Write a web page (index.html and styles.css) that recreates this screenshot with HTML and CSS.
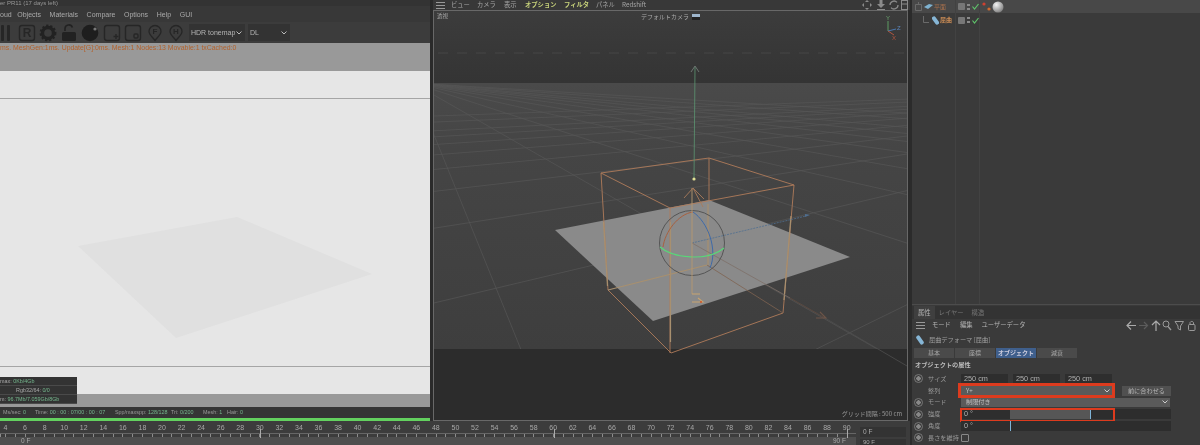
FILE: index.html
```html
<!DOCTYPE html>
<html lang="ja">
<head>
    <meta charset="UTF-8">
    <meta name="viewport" content="width=device-width, initial-scale=1.0">
    <title>Cinema 4D Redshift</title>
    <link rel="stylesheet" href="styles.css">
</head>
<body>
<div class="app">
    <div class="work">
        <div class="panes">

            <!-- Render view -->
            <div class="render">
                <div class="render-title">er PR11 (17 days left)</div>
                <div class="render-menu">
                    <span>oud</span><span>Objects</span><span>Materials</span><span>Compare</span><span>Options</span><span>Help</span><span>GUI</span>
                </div>
                <div class="render-tools">
                    <svg class="tool-icons" width="184" height="21" viewBox="0 0 184 21">
                        <rect x="1" y="3" width="3" height="16" rx="1" fill="#262626"/>
                        <rect x="7" y="3" width="3" height="16" rx="1" fill="#262626"/>
                        <rect x="19.5" y="3.5" width="15" height="15" rx="2.5" fill="none" stroke="#262626" stroke-width="1.4"/>
                        <text x="27" y="15" text-anchor="middle" class="tool-letter">R</text>
                        <circle cx="48" cy="11" r="5.5" fill="none" stroke="#222" stroke-width="3.4"/>
                        <circle cx="48" cy="11" r="7.4" fill="none" stroke="#222" stroke-width="2" stroke-dasharray="2.2 1.9"/>
                        <path d="M65 9V6.5a3.8 3.8 0 0 1 7.4-1" fill="none" stroke="#222" stroke-width="1.6"/>
                        <rect x="62" y="10" width="14" height="9" rx="1.5" fill="#222"/>
                        <circle cx="90" cy="11" r="8.3" fill="#1e1e1e"/>
                        <circle cx="95" cy="7" r="1.6" fill="#777"/>
                        <rect x="104.5" y="3.5" width="15" height="15" rx="2.5" fill="none" stroke="#262626" stroke-width="1.4"/>
                        <path d="M116 12v5M113.5 14.5h5" stroke="#262626" stroke-width="1.4"/>
                        <rect x="125.5" y="3.5" width="15" height="15" rx="2.5" fill="none" stroke="#262626" stroke-width="1.4"/>
                        <rect x="134" y="12" width="4" height="4" rx="1" fill="none" stroke="#262626" stroke-width="1.4"/>
                        <path d="M155 3.5a6 6 0 0 1 6 6c0 3-3 5-6 9-3-4-6-6-6-9a6 6 0 0 1 6-6z" fill="none" stroke="#262626" stroke-width="1.3"/>
                        <text x="155" y="12" text-anchor="middle" class="tool-pin">F</text>
                        <path d="M176 3.5a6 6 0 0 1 6 6c0 3-3 5-6 9-3-4-6-6-6-9a6 6 0 0 1 6-6z" fill="none" stroke="#262626" stroke-width="1.3"/>
                        <text x="176" y="12" text-anchor="middle" class="tool-pin">H</text>
                    </svg>
                    <div class="tool-select tool-select-wide">HDR tonemap<svg width="6" height="4" viewBox="0 0 6 4"><path d="M.5.5 3 3 5.5.5" fill="none" stroke="#bbb"/></svg></div>
                    <div class="tool-select">DL<svg width="6" height="4" viewBox="0 0 6 4"><path d="M.5.5 3 3 5.5.5" fill="none" stroke="#bbb"/></svg></div>
                </div>
                <div class="render-log">ms. MeshGen:1ms. Update[G]:0ms. Mesh:1 Nodes:13 Movable:1 txCached:0</div>
                <div class="render-image">
                    <div class="image-head"></div>
                    <div class="image-body">
                        <svg class="image-plane" viewBox="0 0 430 267" width="430" height="267">
                            <polygon points="78,147 237,118 372,175 176,239" fill="#e0e0e0"/>
                        </svg>
                    </div>
                    <div class="image-foot"></div>
                    <div class="stats">
                        <div>max: <b>0Kb/4Gb</b></div>
                        <div class="stats-mid">Rgb32/64: <b>0/0</b></div>
                        <div>m: <b>96.7Mb/7.059Gb/8Gb</b></div>
                    </div>
                </div>
                <div class="render-gap"></div>
                <div class="render-status">
                    <span class="st-a">Ms/sec: <b>0</b></span>
                    <span class="st-b">Time: <b>00 : 00 : 07/00 : 00 : 07</b></span>
                    <span class="st-c">Spp/maxspp: <b>128/128</b></span>
                    <span class="st-d">Tri: <b>0/200</b></span>
                    <span class="st-e">Mesh: <b>1</b></span>
                    <span>Hair: <b>0</b></span>
                </div>
                <div class="render-progress"></div>
            </div>

            <!-- 3D viewport -->
            <div class="view">
                <div class="view-menu">
                    <svg class="burger" width="9" height="7" viewBox="0 0 9 7"><path d="M0 .5h9M0 3.5h9M0 6.5h9" stroke="#999"/></svg>
                    <span class="vm-a">ビュー</span>
                    <span class="vm-b">カメラ</span>
                    <span class="vm-c">表示</span>
                    <span class="vm-d hot">オプション</span>
                    <span class="vm-e hot">フィルタ</span>
                    <span class="vm-f">パネル</span>
                    <span>Redshift</span>
                    <svg class="view-nav" width="46" height="10" viewBox="0 0 46 10">
                        <path d="M5 0 7 2H3zM5 10 3 8h4zM0 5l2-2v4zM10 5 8 7V3z" fill="#8a8a8a"/>
                        <path d="M17.5 0h3v4h2.5L19 8l-4-4h2.5zM15 9h8v1h-8z" fill="#8a8a8a"/>
                        <path d="M28 5a4 4 0 0 1 7-2.6M36 5a4 4 0 0 1-7 2.6" fill="none" stroke="#8a8a8a" stroke-width="1.3"/>
                        <rect x="39.5" y=".5" width="6" height="9" fill="none" stroke="#8a8a8a"/>
                        <path d="M39.5 4h6" stroke="#8a8a8a"/>
                    </svg>
                </div>
                <div class="view-canvas">
                    <svg class="scene" viewBox="434 11 473 409" preserveAspectRatio="none">
                        <defs>
                            <linearGradient id="sky" x1="0" y1="0" x2="0" y2="1">
                                <stop offset="0" stop-color="#3c3c3c"/>
                                <stop offset="1" stop-color="#343434"/>
                            </linearGradient>
                            <linearGradient id="floor" x1="0" y1="0" x2="0" y2="1">
                                <stop offset="0" stop-color="#4a4a4a"/>
                                <stop offset=".25" stop-color="#454545"/>
                                <stop offset="1" stop-color="#3e3e3e"/>
                            </linearGradient>
                            <clipPath id="ground"><rect x="434" y="83" width="473" height="266"/></clipPath>
                        </defs>
                        <rect x="434" y="11" width="473" height="72" fill="url(#sky)"/>
                        <rect x="434" y="83" width="473" height="266" fill="url(#floor)"/>
                        <rect x="434" y="349" width="473" height="71" fill="#2c2c2c"/>
                        <path d="M438 53H906" stroke="#474747" stroke-dasharray="10 9"/>

                        <!-- floor grid, lines run to two vanishing points -->
                        <g clip-path="url(#ground)" fill="none" stroke="#565656" stroke-width=".7">
                            <path d="M413 83-148 683M413 83 656 683M413 83 1460 683M413 83 2264 683M413 83 3068 683M413 83 3872 683M413 83 4676 683M413 83 5480 683M413 83 6284 683M413 83 7088 683M413 83 8692 683M413 83 10296 683"/>
                            <path d="M1360 83 1434 683M1360 83 134 683M1360 83-1166 683M1360 83-2466 683M1360 83-3766 683M1360 83-5066 683M1360 83-6366 683M1360 83-7666 683M1360 83-8966 683M1360 83-10266 683M1360 83-12866 683M1360 83-15466 683"/>
                        </g>
                        <path d="M825 318 907 366" stroke="#4e4e4e" stroke-width=".8"/>

                        <!-- plane -->
                        <polygon points="555,230 709,200 850,257 653,321" fill="#8a8a8a"/>

                        <!-- bend box -->
                        <g fill="none" stroke="#b07c5a" stroke-width=".9">
                            <path d="M601 173 709 158 794 185 670 208 601 173 608 290 671 353 783 313 794 185M709 158V200M670 208V353"/>
                        </g>
                        <path d="M707 265 783 313" fill="none" stroke="#7f6350" stroke-width=".8"/>
                        <g fill="none" stroke="#a8906f" stroke-width="1.2">
                            <path d="M608 290 707 265M670.5 222V342M603.5 222 607.5 286M791 216 784 300M708 204V265"/>
                        </g>

                        <!-- axes -->
                        <path d="M692 243 806 216" stroke="#4f6e90" stroke-width=".8" stroke-dasharray="2 1"/>
                        <path d="M805 214 810 215 805 217z" fill="#4f6e90"/>
                        <path d="M692 243 790 298" stroke="#7d7068" stroke-width=".8"/>
                        <path d="M790 298 825 318" stroke="#5e4b41" stroke-width=".9"/>
                        <path d="M816 318H826L820 312" fill="none" stroke="#6e5548" stroke-width="1.1"/>
                        <path d="M694 179 695 67" stroke="#5c9571" stroke-width=".8"/>
                        <path d="M691 72 695 66 699 72" fill="none" stroke="#6c7671"/>
                        <circle cx="694" cy="179" r="1.6" fill="#e0df96"/>

                        <!-- sphere -->
                        <circle cx="692" cy="243" r="32.5" fill="none" stroke="#555" stroke-width="1"/>
                        <path d="M693 212C678 214 665 232 663 247" fill="none" stroke="#a8603f" stroke-width="1"/>
                        <path d="M693 212C708 222 718 250 710 268" fill="none" stroke="#3f6aa8" stroke-width="1"/>
                        <path d="M660 247C672 258 708 262 724 248" fill="none" stroke="#58d878" stroke-width="1.1"/>

                        <!-- orange gizmo -->
                        <path d="M692 188V294" stroke="#b59770" stroke-width=".9"/>
                        <path d="M684 198 693 188 704 199M693 188 703 207" fill="none" stroke="#a87a5a" stroke-width=".9"/>
                        <path d="M692 294H700M698 298 703 302H692" fill="none" stroke="#c8a470" stroke-width="1.1"/>
                        <circle cx="701" cy="302" r=".9" fill="#d44c20"/>
                    </svg>
                    <span class="cam-type">透視</span>
                    <span class="cam-name">デフォルトカメラ<i class="cam-mark"></i></span>
                    <svg class="gizmo" width="22" height="26" viewBox="0 0 22 26">
                        <text x="6" y="6" class="giz-y">Y</text>
                        <path d="M8 7V17" stroke="#5d9c63" stroke-width="1"/>
                        <path d="M8 17 16 15" stroke="#4a78b0" stroke-width="1"/>
                        <path d="M8 17 14 21" stroke="#b4563f" stroke-width="1"/>
                        <text x="17" y="16" class="giz-z">Z</text>
                        <text x="12" y="26" class="giz-x">X</text>
                    </svg>
                    <span class="grid-size">グリッド間隔 : 500 cm</span>
                </div>
            </div>
        </div>

        <!-- Timeline -->
        <div class="timeline">
            <div class="ruler">
                <div class="nums">
                    <span>4</span><span>6</span><span>8</span><span>10</span><span>12</span><span>14</span><span>16</span><span>18</span><span>20</span><span>22</span><span>24</span><span>26</span><span>28</span><span>30</span><span>32</span><span>34</span><span>36</span><span>38</span><span>40</span><span>42</span><span>44</span><span>46</span><span>48</span><span>50</span><span>52</span><span>54</span><span>56</span><span>58</span><span>60</span><span>62</span><span>64</span><span>66</span><span>68</span><span>70</span><span>72</span><span>74</span><span>76</span><span>78</span><span>80</span><span>82</span><span>84</span><span>86</span><span>88</span><span>90</span>
                </div>
                <div class="ticks"></div>
                <i class="mark mark-30"></i><i class="mark mark-60"></i><i class="mark mark-90"></i>
                <div class="range"><span>0 F</span><span>90 F</span></div>
            </div>
            <div class="frames">
                <div class="frame">0 F</div>
                <div class="frame frame-end">90 F</div>
            </div>
        </div>
    </div>

    <div class="side">
        <!-- Object manager -->
        <div class="tree">
            <div class="tree-row tree-row-on">
                <svg class="tree-node" width="7" height="9" viewBox="0 0 7 9"><path d="M3.5 0V2M.5 2.5h6v6h-6z" fill="none" stroke="#6a6a6a"/></svg>
                <svg class="tree-icon" width="9" height="7" viewBox="0 0 9 7"><path d="M0 4 5 1l4 1-5 4z" fill="#7fb2d0"/></svg>
                <span class="tree-name">平面</span>
                <i class="vis"></i><i class="dots"></i>
                <svg class="tick" width="7" height="7" viewBox="0 0 7 7"><path d="M.5 3.5 2.5 6 6.5 1" fill="none" stroke="#5fc26a" stroke-width="1.2"/></svg>
                <svg class="tags" width="22" height="12" viewBox="0 0 22 12">
                    <circle cx="2" cy="3" r="1.6" fill="#d04030"/>
                    <circle cx="7" cy="8" r="1.6" fill="#d06a30"/>
                    <defs><radialGradient id="ball" cx=".35" cy=".3" r=".8"><stop offset="0" stop-color="#f4f4f4"/><stop offset="1" stop-color="#777"/></radialGradient></defs>
                    <circle cx="16" cy="6" r="5.5" fill="url(#ball)"/>
                </svg>
            </div>
            <div class="tree-row">
                <svg class="tree-link" width="8" height="8" viewBox="0 0 8 8"><path d="M.5 0V6.5H6" fill="none" stroke="#6a6a6a"/></svg>
                <svg class="tree-icon" width="7" height="9" viewBox="0 0 7 9"><rect x="1.5" y="0" width="4" height="9" rx="1.5" transform="rotate(-35 3.5 4.5)" fill="#86b6d6"/></svg>
                <span class="tree-name tree-name-sel">屈曲</span>
                <i class="vis"></i><i class="dots"></i>
                <svg class="tick" width="7" height="7" viewBox="0 0 7 7"><path d="M.5 3.5 2.5 6 6.5 1" fill="none" stroke="#5fc26a" stroke-width="1.2"/></svg>
            </div>
            <i class="tree-line tree-line-a"></i><i class="tree-line tree-line-b"></i>
        </div>

        <!-- Attribute manager -->
        <div class="props">
            <div class="prop-tabs">
                <span class="prop-tab on">属性</span>
                <span class="prop-tab">レイヤー</span>
                <span class="prop-tab">構造</span>
            </div>
            <div class="prop-menu">
                <svg class="burger" width="9" height="7" viewBox="0 0 9 7"><path d="M0 .5h9M0 3.5h9M0 6.5h9" stroke="#999"/></svg>
                <span>モード</span><span>編集</span><span>ユーザーデータ</span>
                <svg class="prop-nav" width="70" height="11" viewBox="0 0 70 11">
                    <path d="M10 5.5H1M5 1.5l-4 4 4 4" fill="none" stroke="#aaa" stroke-width="1.2"/>
                    <path d="M13 5.5h8M18 2l3.5 3.5L18 9" fill="none" stroke="#5c5c5c" stroke-width="1.2"/>
                    <path d="M30 11V1.5M26 5l4-4 4 4" fill="none" stroke="#aaa" stroke-width="1.2"/>
                    <circle cx="40" cy="4" r="3" fill="none" stroke="#999"/><path d="M42 6.5 45 10" stroke="#999" stroke-width="1.3"/>
                    <path d="M49 1.5h8.5L54.5 6v4l-2.5-1.5V6z" fill="none" stroke="#999"/>
                    <rect x="62.5" y="4.5" width="6.5" height="6" rx="1" fill="none" stroke="#999"/>
                    <path d="M64 4.5V2.5a2 2 0 0 1 3.5 0v2" fill="none" stroke="#999"/>
                </svg>
            </div>
            <div class="prop-title">
                <svg width="8" height="10" viewBox="0 0 8 10"><rect x="2" y="0" width="4" height="10" rx="1.8" transform="rotate(-35 4 5)" fill="#86b6d6"/></svg>
                <span>屈曲デフォーマ [屈曲]</span>
            </div>
            <div class="prop-pages">
                <span>基本</span><span>座標</span><span class="on">オブジェクト</span><span>減衰</span>
            </div>
            <div class="prop-head">オブジェクトの属性</div>

            <div class="row">
                <i class="radio"></i><label>サイズ</label>
                <span class="num">250 cm</span><span class="num">250 cm</span><span class="num">250 cm</span>
            </div>
            <div class="row">
                <i class="radio radio-none"></i><label>整列</label>
                <div class="select select-short hl">Y+<svg width="6" height="4" viewBox="0 0 6 4"><path d="M.5.5 3 3 5.5.5" fill="none" stroke="#ccc"/></svg></div>
                <span class="btn">前に合わせる</span>
            </div>
            <div class="row">
                <i class="radio"></i><label>モード</label>
                <div class="select select-long">制限付き<svg width="6" height="4" viewBox="0 0 6 4"><path d="M.5.5 3 3 5.5.5" fill="none" stroke="#ccc"/></svg></div>
            </div>
            <div class="row">
                <i class="radio"></i><label>強度</label>
                <div class="slider">
                    <span class="num num-deg">0 °</span>
                    <div class="track"><i class="fill"></i><i class="thumb"></i></div>
                    <i class="hl-box"></i>
                </div>
            </div>
            <div class="row">
                <i class="radio"></i><label>角度</label>
                <div class="slider">
                    <span class="num num-deg">0 °</span>
                    <div class="track"><i class="thumb"></i></div>
                </div>
            </div>
            <div class="row">
                <i class="radio"></i><label>長さを維持</label>
                <i class="check"></i>
            </div>
        </div>
    </div>
</div>
</body>
</html>
```

FILE: styles.css
```css
html, body {
    margin: 0;
    height: 100%;
    overflow: hidden;
    background: #3a3a3a;
}

.app {
    display: flex;
    width: 1200px;
    height: 445px;
    overflow: hidden;
    font-family: "Noto Sans CJK JP", "Noto Sans", sans-serif;
    font-size: 7px;
    line-height: 1;
    color: #aaa;
    background: #3a3a3a;
    filter: blur(0.45px);
}

.app i {
    display: block;
    font-style: normal;
}

.work {
    display: flex;
    flex-direction: column;
    flex: 0 0 910px;
}

.panes {
    display: flex;
    height: 421px;
    background: #2a2a2a;
}

/* render view */
.render {
    display: flex;
    flex-direction: column;
    flex: 0 0 430px;
    overflow: hidden;
}

.render-title {
    height: 6px;
    line-height: 6px;
    font-size: 6px;
    background: #333;
    color: #999;
    font-family: "Liberation Sans", sans-serif;
}

.render-menu {
    display: flex;
    align-items: center;
    gap: 8.6px;
    height: 16px;
    background: #383838;
    color: #aaa;
    font-family: "Liberation Sans", sans-serif;
    font-size: 7px;
}

.render-menu span:first-child {
    margin-right: -3px;
}

.render-tools {
    display: flex;
    align-items: center;
    height: 21px;
    background: #3c3c3c;
}

.tool-icons {
    flex: 0 0 184px;
    margin-right: 5px;
}

.tool-letter {
    font: bold 12px "Liberation Sans", sans-serif;
    fill: #262626;
}

.tool-pin {
    font: bold 8px "Liberation Sans", sans-serif;
    fill: #262626;
}

.tool-select {
    display: flex;
    align-items: center;
    justify-content: space-between;
    box-sizing: border-box;
    width: 42px;
    height: 17px;
    padding: 0 3px 0 2px;
    background: #333;
    color: #b5b5b5;
    font-family: "Liberation Sans", sans-serif;
    font-size: 7px;
}

.tool-select-wide {
    width: 56px;
    margin-right: 3px;
}

.render-log {
    height: 28px;
    padding-top: 1px;
    box-sizing: border-box;
    background: #999;
    color: #b3622c;
    font-family: "Liberation Sans", sans-serif;
    font-size: 6.9px;
    line-height: 7px;
    white-space: nowrap;
}

.render-image {
    position: relative;
    display: flex;
    flex-direction: column;
    height: 323px;
    background: #e6e6e6;
}

.image-head {
    height: 27px;
    border-bottom: 1.5px solid #a5a5a5;
}

.image-body {
    flex: 1;
    overflow: hidden;
}

.image-plane {
    display: block;
}

.image-foot {
    height: 27px;
    border-top: 1.5px solid #a5a5a5;
}

.stats {
    position: absolute;
    left: 0;
    top: 306px;
    width: 77px;
    background: #333;
    color: #aaa;
    font-family: "Liberation Sans", sans-serif;
    font-size: 5.4px;
}

.stats div {
    height: 9px;
    line-height: 8px;
    border-bottom: 1px solid #4a4a4a;
    box-sizing: border-box;
    white-space: nowrap;
}

.stats b,
.render-status b {
    font-weight: normal;
    color: #74b58c;
}

.stats .stats-mid {
    padding-left: 16px;
}

.render-gap {
    height: 13px;
    background: #999;
}

.render-status {
    display: flex;
    align-items: center;
    height: 11px;
    padding-left: 3px;
    background: #353535;
    color: #999;
    font-family: "Liberation Sans", sans-serif;
    font-size: 5.4px;
    white-space: nowrap;
}

.st-a { width: 32px; }
.st-b { width: 80px; }
.st-c { width: 56px; }
.st-d { width: 32px; }
.st-e { width: 24px; }

.render-progress {
    height: 3px;
    background: #63d15f;
}

/* viewport */
.view {
    display: flex;
    flex-direction: column;
    flex: 1;
    margin-left: 3px;
}

.view-menu {
    display: flex;
    align-items: center;
    height: 10px;
    padding-left: 3px;
    color: #a5a5a5;
    background: #383838;
    white-space: nowrap;
    font-size: 6.3px;
}

.view-menu .burger {
    margin-right: 6px;
}

.vm-a { width: 26px; }
.vm-b { width: 27px; }
.vm-c { width: 21px; }
.vm-d { width: 39px; }
.vm-e { width: 32px; }
.vm-f { width: 26px; }

.hot {
    color: #c7d27a;
    font-weight: bold;
}

.view-nav {
    margin-left: auto;
    margin-right: 2px;
}

.view-canvas {
    position: relative;
    flex: 1;
    margin-right: 2px;
    border: 1px solid #686868;
    background: #333;
}

.scene {
    display: block;
    width: 100%;
    height: 100%;
}

.cam-type {
    position: absolute;
    left: 3px;
    top: 3px;
    font-size: 5.5px;
    color: #aaa;
}

.cam-name {
    position: absolute;
    left: 207px;
    top: 3px;
    display: flex;
    align-items: center;
    font-size: 6px;
    color: #aaa;
    white-space: nowrap;
}

.cam-mark {
    width: 8px;
    height: 6px;
    margin-left: 3px;
    background: linear-gradient(#9fb6cc 50%, #222 50%);
}

.gizmo {
    position: absolute;
    right: 5px;
    top: 3px;
}

.giz-y,
.giz-z,
.giz-x {
    font: 6px "Liberation Sans", sans-serif;
}

.giz-y { fill: #6ba46f; }
.giz-z { fill: #5a85bb; }
.giz-x { fill: #b4563f; }

.grid-size {
    position: absolute;
    right: 5px;
    bottom: 3px;
    font-size: 6px;
    color: #999;
    white-space: nowrap;
}

/* timeline */
.timeline {
    display: flex;
    flex: 1;
    background: #3c3c3c;
}

.ruler {
    position: relative;
    flex: 0 0 856px;
    overflow: hidden;
}

.nums {
    display: flex;
    height: 12px;
    margin-left: -4.3px;
    color: #a8a8a8;
    font-family: "Liberation Sans", sans-serif;
    font-size: 7px;
    line-height: 14px;
}

.nums span {
    flex: 0 0 19.57px;
    text-align: center;
}

.ticks {
    height: 3px;
    border-top: 1px solid #666;
    background: repeating-linear-gradient(to right, #8c8c8c 0 1px, transparent 1px 9.785px) 5px 0;
}

.mark {
    position: absolute;
    top: 8px;
    width: 1px;
    height: 9px;
    background: #aaa;
}

.mark-30 { left: 260px; }
.mark-60 { left: 554px; }
.mark-90 { left: 847px; }

.range {
    display: flex;
    justify-content: space-between;
    height: 8px;
    padding: 0 10px 0 21px;
    background: #4e4e4e;
    font-family: "Liberation Sans", sans-serif;
    font-size: 6.5px;
    line-height: 8px;
    color: #aaa;
}

.frames {
    display: flex;
    flex-direction: column;
    gap: 2px;
    padding: 6px 0 0 4px;
}

.frame {
    box-sizing: border-box;
    flex: 0 0 10px;
    width: 46px;
    padding-left: 3px;
    background: #333;
    font-family: "Liberation Sans", sans-serif;
    font-size: 6.5px;
    line-height: 10px;
    color: #aaa;
}

.frame-end {
    flex: 0 0 6px;
    font-size: 6px;
    line-height: 6px;
}

/* right column */
.side {
    display: flex;
    flex-direction: column;
    flex: 1;
    border-left: 2px solid #2b2b2b;
}

.tree {
    position: relative;
    height: 304px;
    border-bottom: 1px solid #4c4c4c;
}

.tree-row {
    display: flex;
    align-items: center;
    height: 14px;
    padding-left: 3px;
}

.tree-row-on {
    height: 13px;
    background: #484848;
}

.tree-node {
    margin-right: 2px;
}

.tree-link {
    margin: 0 1px 0 8px;
}

.tree-icon {
    margin-right: 1px;
}

.tree-name {
    width: 24px;
    font-size: 6px;
    color: #a8704c;
}

.tree-name-sel {
    width: 18px;
    color: #c78a55;
    font-weight: bold;
}

.vis {
    width: 7px;
    height: 7px;
    margin-right: 2px;
    background: #777;
    border-radius: 1px;
}

.dots {
    width: 3px;
    height: 8px;
    margin-right: 2px;
    background: radial-gradient(circle, #8a8a8a 1.4px, transparent 1.5px) 0 0 / 3px 4px;
}

.tick {
    margin-right: 3px;
}

.tree-line {
    position: absolute;
    top: 0;
    width: 1px;
    height: 100%;
    background: #424242;
}

.tree-line-a { left: 43px; }
.tree-line-b { left: 67px; }

.props {
    display: flex;
    flex-direction: column;
    padding-left: 2px;
}

.prop-tabs {
    display: flex;
    align-items: stretch;
    height: 13px;
    margin-top: 1px;
    margin-left: -2px;
    background: #333;
}

.prop-tab {
    padding: 0 4px;
    line-height: 13px;
    font-size: 6.3px;
    color: #777;
}

.prop-tab.on {
    margin-left: 2px;
    background: #3f3f3f;
    color: #b5b5b5;
}

.prop-menu {
    display: flex;
    align-items: center;
    height: 13px;
    padding-left: 2px;
    font-size: 6.3px;
    color: #b5b5b5;
}

.prop-menu .burger {
    margin-right: 7px;
}

.prop-menu span {
    margin-right: 9px;
}

.prop-nav {
    margin-left: auto;
    margin-right: 4px;
}

.prop-title {
    display: flex;
    align-items: center;
    gap: 5px;
    height: 16px;
    padding-left: 2px;
    font-size: 6.2px;
    color: #a0a0a0;
}

.prop-pages {
    display: flex;
    gap: 1px;
    height: 10px;
}

.prop-pages span {
    flex: 0 0 40px;
    background: #4a4a4a;
    text-align: center;
    line-height: 10px;
    font-size: 6px;
    color: #aaa;
}

.prop-pages .on {
    background: #3f5f8c;
    color: #ccd;
    font-weight: bold;
}

.prop-head {
    height: 15px;
    padding: 4px 0 0 1px;
    box-sizing: border-box;
    font-size: 6.2px;
    font-weight: bold;
    color: #bbb;
}

.row {
    display: flex;
    align-items: center;
    gap: 0;
    height: 11.8px;
    font-size: 6.2px;
    color: #999;
}

.row label {
    flex: 0 0 33px;
    white-space: nowrap;
}

.radio {
    box-sizing: border-box;
    flex: 0 0 9px;
    height: 9px;
    margin-right: 5px;
    border: 1px solid #777;
    border-radius: 50%;
    background: radial-gradient(circle, #888 2px, transparent 2.4px);
}

.radio-none {
    border: none;
    background: none;
}

.num {
    position: relative;
    box-sizing: border-box;
    flex: 0 0 47px;
    height: 9px;
    margin-right: 5px;
    padding-left: 3px;
    background: #2e2e2e;
    line-height: 9px;
    font-family: "Liberation Sans", sans-serif;
    font-size: 7.3px;
    color: #b0b0b0;
}

.select {
    display: flex;
    align-items: center;
    justify-content: space-between;
    box-sizing: border-box;
    height: 9px;
    padding: 0 2px 0 5px;
    background: #5a5a5a;
    color: #c0c0c0;
}

.select-short {
    flex: 0 0 151px;
}

.select-long {
    flex: 0 0 209px;
}

.hl {
    outline: 3px solid #dd3b1e;
    outline-offset: 0;
}

.btn {
    flex: 0 0 49px;
    height: 10px;
    margin-left: 10px;
    background: #505050;
    text-align: center;
    line-height: 10px;
    color: #b5b5b5;
}

.slider {
    position: relative;
    display: flex;
    flex: 0 0 210px;
    height: 10px;
}

.slider .num {
    flex: 0 0 49px;
    height: 10px;
    margin: 0;
    line-height: 10px;
}

.track {
    position: relative;
    flex: 1;
    background: #2d2d2d;
}

.fill {
    position: absolute;
    left: 0;
    top: 0;
    bottom: 0;
    width: 80px;
    background: #565656;
}

.thumb {
    position: absolute;
    left: 0;
    top: 0;
    width: 1px;
    height: 100%;
    background: #7fb4d8;
}

.fill + .thumb {
    left: 80px;
}

.hl-box {
    position: absolute;
    left: -1px;
    top: -1px;
    width: 151px;
    height: 10px;
    border: 2px solid #dd3b1e;
}

.check {
    box-sizing: border-box;
    width: 8px;
    height: 8px;
    border: 1px solid #888;
    border-radius: 1px;
}
```
